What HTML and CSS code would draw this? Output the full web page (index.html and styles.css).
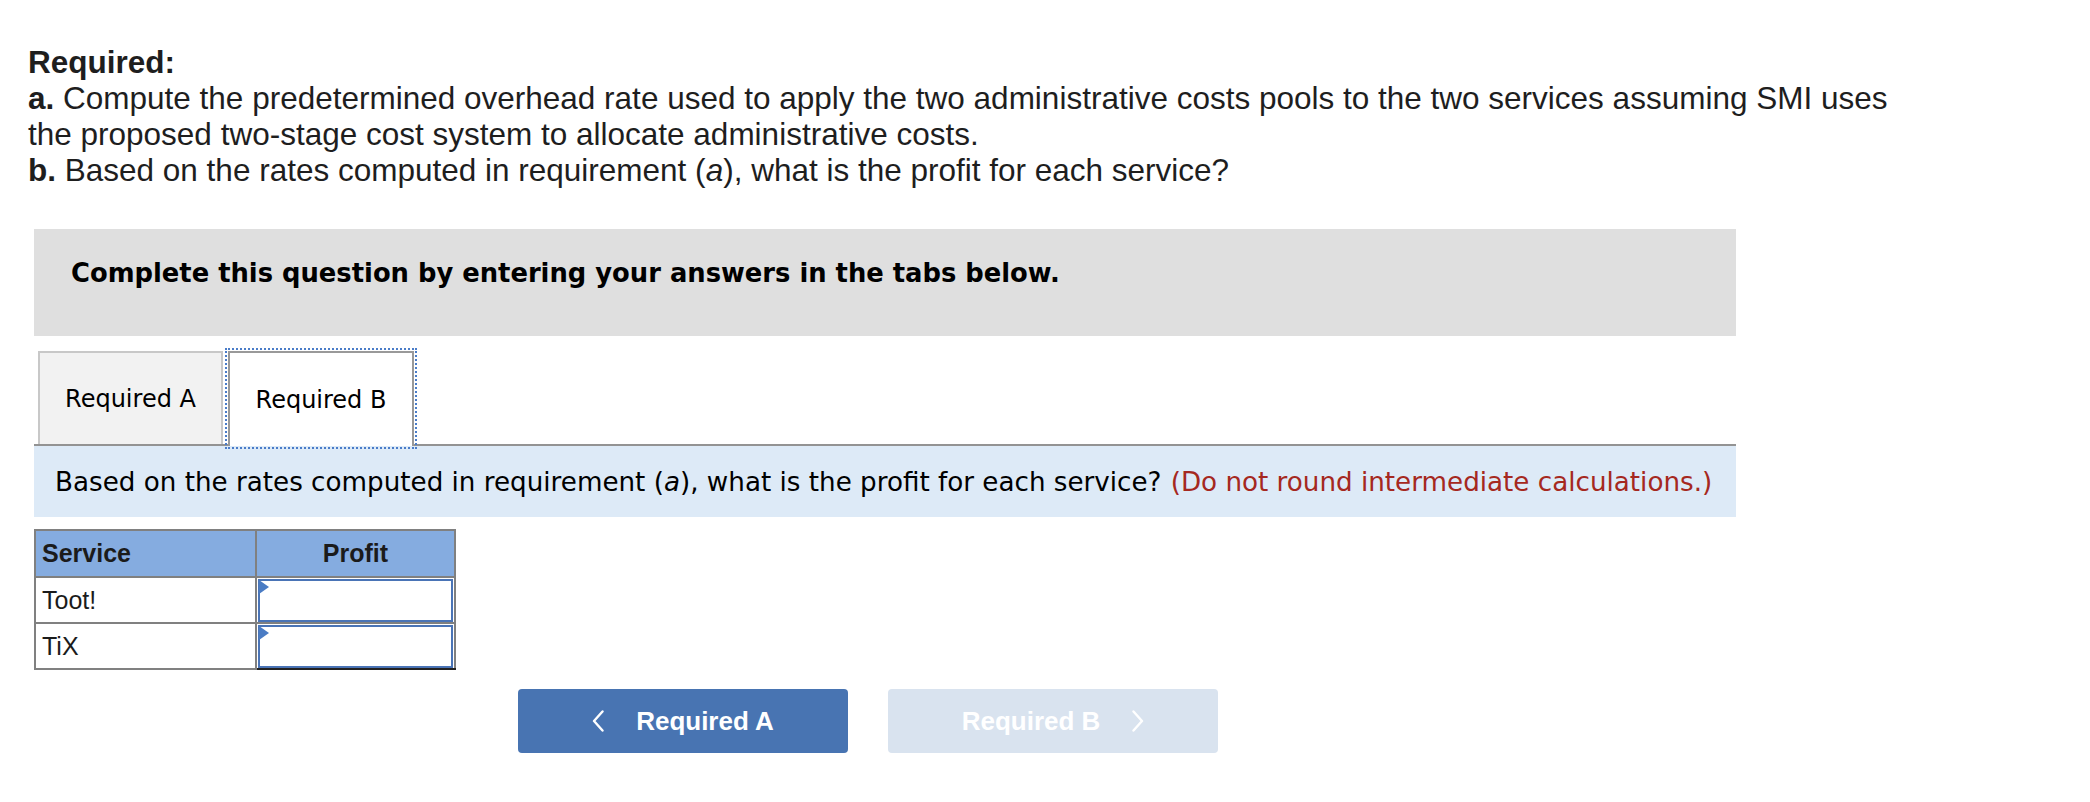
FILE: index.html
```html
<!DOCTYPE html>
<html lang="en">
<head>
<meta charset="utf-8">
<title>Required</title>
<link rel="stylesheet" href="styles.css">
</head>
<body>
<div class="page">
  <div class="req">
    <p class="req-title">Required:</p>
    <p><b>a.</b> Compute the predetermined overhead rate used to apply the two administrative costs pools to the two services assuming SMI uses<br>the proposed two-stage cost system to allocate administrative costs.</p>
    <p><b>b.</b> Based on the rates computed in requirement (<i>a</i>), what is the profit for each service?</p>
  </div>

  <div class="content">
    <div class="instructions">Complete this question by entering your answers in the tabs below.</div>

    <div class="tabs">
      <div class="tab">Required A</div>
      <div class="tab tab-active">Required B</div>
    </div>

    <div class="prompt">Based on the rates computed in requirement (<i>a</i>), what is the profit for each service? <span class="note">(Do not round intermediate calculations.)</span></div>

    <table class="grid">
      <thead>
        <tr><th class="col-service">Service</th><th class="col-profit">Profit</th></tr>
      </thead>
      <tbody>
        <tr><td>Toot!</td><td class="cell-input"><div class="input"></div></td></tr>
        <tr><td>TiX</td><td class="cell-input cell-last"><div class="input"></div></td></tr>
      </tbody>
    </table>

    <div class="nav">
      <button class="btn btn-prev" type="button">
        <svg class="chev" width="12" height="22" viewBox="0 0 12 22"><polyline points="10.5,1.5 2,11 10.5,20.5" fill="none" stroke="#ffffff" stroke-width="2.4" stroke-linecap="round" stroke-linejoin="round"/></svg>
        <span>Required A</span>
      </button>
      <button class="btn btn-next" type="button">
        <span>Required B</span>
        <svg class="chev" width="12" height="22" viewBox="0 0 12 22"><polyline points="1.5,1.5 10,11 1.5,20.5" fill="none" stroke="#ffffff" stroke-width="2.4" stroke-linecap="round" stroke-linejoin="round"/></svg>
      </button>
    </div>
  </div>
</div>
</body>
</html>
```

FILE: styles.css
```css
* { box-sizing: border-box; }

body {
  margin: 0;
  background: #ffffff;
  color: #000000;
}

.page {
  padding: 44px 0 40px 28px;
}

.req {
  font-family: "Liberation Sans", Arial, sans-serif;
  font-size: 31.5px;
  line-height: 36px;
  color: #1e1e1e;
}

.req p {
  margin: 0;
  white-space: nowrap;
}

.req .req-title {
  font-weight: 700;
}

.req b {
  font-weight: 700;
}

.content {
  margin-left: 6px;
  margin-top: 41px;
  width: 1702px;
}

.instructions {
  background: #dfdfdf;
  height: 107px;
  padding: 29px 0 0 37px;
  font-family: "DejaVu Sans", Verdana, sans-serif;
  font-weight: 700;
  font-size: 25.8px;
  line-height: 30px;
  color: #000000;
}

.tabs {
  display: flex;
  gap: 5px;
  margin-top: 15px;
  padding-left: 4px;
  border-bottom: 2px solid #939393;
  height: 95px;
  align-items: flex-end;
}

.tab {
  width: 185px;
  height: 93px;
  display: flex;
  align-items: center;
  justify-content: center;
  font-family: "DejaVu Sans", Verdana, sans-serif;
  font-size: 24px;
  color: #000000;
  background: #f2f2f2;
  border: 2px solid #c8c8c8;
  border-bottom: none;
}

.tab-active {
  width: 186px;
  height: 95px;
  margin-bottom: -2px;
  background: #ffffff;
  border: 2px solid #999999;
  border-bottom: none;
  outline: 2px dotted #4a7cc8;
  outline-offset: 1px;
  position: relative;
}

.prompt {
  background: #ddeaf7;
  height: 71px;
  display: flex;
  align-items: center;
  padding-left: 21px;
  font-family: "DejaVu Sans", Verdana, sans-serif;
  font-size: 26.2px;
  color: #000000;
  white-space: nowrap;
}

.prompt .note {
  color: #a52820;
  margin-left: 0.35em;
}

.grid {
  margin-top: 12px;
  border-collapse: collapse;
  font-family: "Liberation Sans", Arial, sans-serif;
  font-size: 25px;
  color: #1b1b1b;
}

.grid th,
.grid td {
  border: 2px solid #808080;
  padding: 0 6px;
}

.grid th {
  background: #85ace0;
  font-weight: 700;
  height: 47px;
}

.grid .col-service {
  width: 221px;
  text-align: left;
}

.grid .col-profit {
  width: 199px;
  text-align: center;
}

.grid td {
  height: 46px;
}

.grid .cell-input {
  padding: 0;
}

.grid .cell-last {
  border-bottom-color: #222222;
}

.input {
  position: relative;
  height: 43px;
  margin: 0 1px;
  border: 2px solid #4a74b6;
  background: #ffffff;
}

.input::before {
  content: "";
  position: absolute;
  left: -1px;
  top: -1px;
  border-top: 7px solid transparent;
  border-bottom: 7px solid transparent;
  border-left: 10px solid #4a7cc4;
}

.nav {
  display: flex;
  gap: 40px;
  margin-top: 19px;
  padding-left: 484px;
}

.btn {
  width: 330px;
  height: 64px;
  border: none;
  border-radius: 4px;
  display: flex;
  align-items: center;
  justify-content: center;
  gap: 32px;
  font-family: "Liberation Sans", Arial, sans-serif;
  font-weight: 700;
  font-size: 26px;
  color: #ffffff;
  cursor: pointer;
}

.btn-prev {
  background: #4874b2;
}

.btn-next {
  background: #d9e3ef;
}

.chev {
  display: block;
  flex: none;
}
```
